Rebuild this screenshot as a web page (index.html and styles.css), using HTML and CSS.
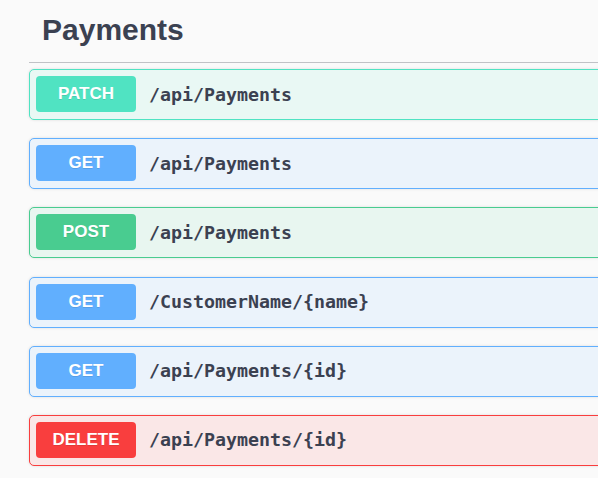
FILE: index.html
```html
<!DOCTYPE html>
<html>
<head>
<meta charset="utf-8">
<link rel="stylesheet" href="styles.css">
</head>
<body>
<div class="tag-section">
  <h3 class="tag-title">Payments</h3>
  <div class="ops">
    <div class="opblock patch"><span class="method">PATCH</span><span class="path">/api/Payments</span></div>
    <div class="opblock get"><span class="method">GET</span><span class="path">/api/Payments</span></div>
    <div class="opblock post"><span class="method">POST</span><span class="path">/api/Payments</span></div>
    <div class="opblock get"><span class="method">GET</span><span class="path">/CustomerName/{name}</span></div>
    <div class="opblock get"><span class="method">GET</span><span class="path">/api/Payments/{id}</span></div>
    <div class="opblock delete"><span class="method">DELETE</span><span class="path">/api/Payments/{id}</span></div>
  </div>
</div>
</body>
</html>
```

FILE: styles.css
```css
html, body {
  margin: 0;
  padding: 0;
  background: #fafafa;
  overflow: hidden;
}
body {
  width: 598px;
  height: 478px;
}
.tag-section {
  width: 760px;
  padding-left: 29px;
  font-family: "Liberation Sans", Arial, sans-serif;
  color: #3b4151;
}
.tag-title {
  margin: 0;
  padding: 12px 0 14px 13px;
  font-size: 30px;
  line-height: 36px;
  font-weight: 700;
  color: #3b4151;
  border-bottom: 1px solid rgba(59, 65, 81, 0.3);
}
.ops {
  display: flex;
  flex-direction: column;
  gap: 18.2px;
  margin-top: 6px;
}
.opblock {
  display: flex;
  align-items: center;
  padding: 6px 6px 7px 6px;
  border: 1px solid;
  border-radius: 5px;
  box-shadow: 0 0 3px rgba(0, 0, 0, 0.12);
}
.method {
  width: 100px;
  height: 36px;
  border-radius: 4px;
  display: flex;
  align-items: center;
  justify-content: center;
  color: #fff;
  font-size: 17px;
  font-weight: 700;
  text-shadow: 0 1px 0 rgba(0, 0, 0, 0.1);
  flex-shrink: 0;
}
.path {
  padding-left: 13px;
  font-family: "DejaVu Sans Mono", monospace;
  font-weight: 700;
  font-size: 18.3px;
  color: #3b4151;
}
.patch { background: #e9f8f4; border-color: #50e3c2; }
.patch .method { background: #50e3c2; }
.get { background: #ebf3fb; border-color: #61affe; }
.get .method { background: #61affe; }
.post { background: #e8f6f0; border-color: #49cc90; }
.post .method { background: #49cc90; }
.delete { background: #fae7e7; border-color: #f93e3e; }
.delete .method { background: #f93e3e; }
```
